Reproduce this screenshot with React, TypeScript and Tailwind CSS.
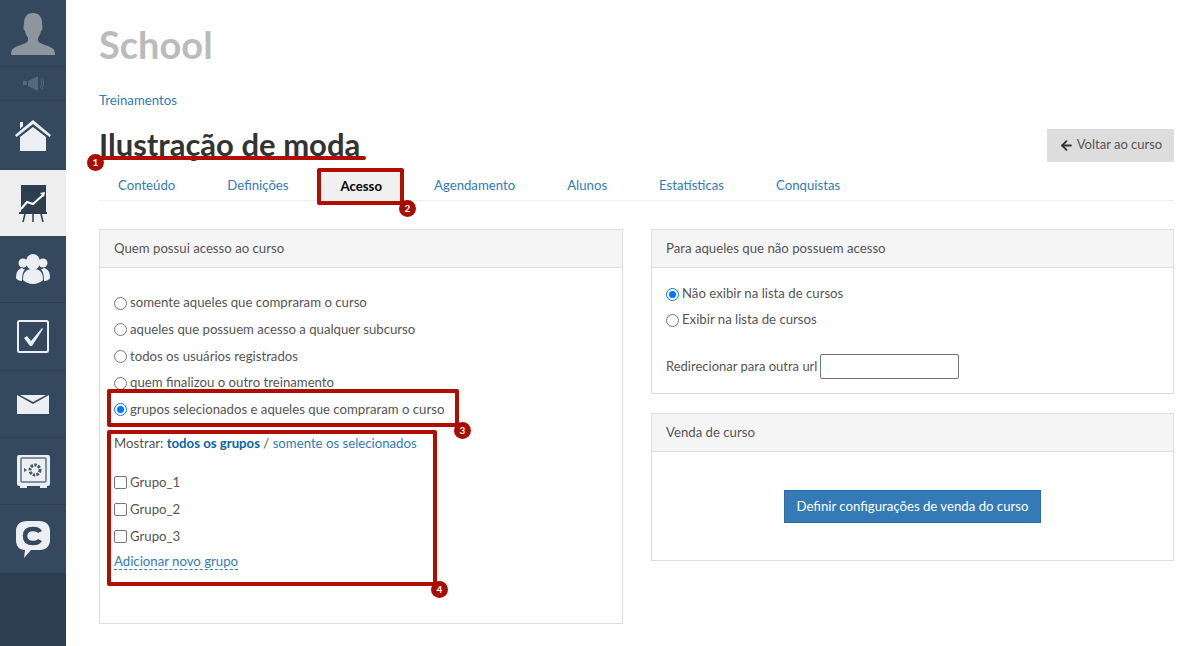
import { ArrowLeft } from 'lucide-react';

const tabs = ['Conteúdo', 'Definições', 'Acesso', 'Agendamento', 'Alunos', 'Estatísticas', 'Conquistas'];

const accessOptions = [
  'somente aqueles que compraram o curso',
  'aqueles que possuem acesso a qualquer subcurso',
  'todos os usuários registrados',
  'quem finalizou o outro treinamento',
  'grupos selecionados e aqueles que compraram o curso',
];

const Radio = ({ checked = false }: { checked?: boolean }) => (
  <span className={`inline-block w-[13px] h-[13px] rounded-full shrink-0 border ${checked ? 'border-[#0075ff] bg-white p-[2px]' : 'border-[#767676] bg-white'}`}>
    {checked && <span className="block w-full h-full rounded-full bg-[#0075ff]" />}
  </span>
);

const Checkbox = () => <span className="inline-block w-[13px] h-[13px] rounded-[2px] border border-[#767676] bg-white shrink-0" />;

const Marker = ({ n }: { n: number }) => (
  <span className="block w-[17px] h-[17px] rounded-full bg-[#a80e00] text-white text-[10px] font-bold leading-[17px] text-center">{n}</span>
);

const Sidebar = () => (
  <aside className="w-[66px] shrink-0 h-[646px] bg-[#2d3e50] flex flex-col">
    <div className="h-[67px] bg-[#34495e] border-b border-[#2d3e50] flex items-center justify-center">
      <svg width="44" height="42" viewBox="0 0 44 42" fill="#8e959c" className="mt-[1px]">
        <path d="M22 0c6 0 9 4 9 10 0 2 .5 3 .5 5s-1 2-1.500 3c-.5 3-1.500 5-3 6.500V28c2 3 9 4 14 7 2 1 3 3 3 7H0c0-4 1-6 3-7 5-3 12-4 14-7v-3.500c-1.500-1.500-2.500-3.500-3-6.500-.5-1-1.500-1-1.500-3s.5-3 .5-5c0-6 3-10 9-10z" />
      </svg>
    </div>
    <div className="h-[34px] bg-[#34495e] border-b border-[#2d3e50] flex items-center justify-center">
      <svg width="21" height="15" viewBox="0 0 21 15" fill="#55687c">
        <path d="M0 5h4v4H0zM5 5l10-5v15L5 10z" />
        <path d="M17 3c2 2 2 7 0 9M19 2c2 3 2 8 0 11" stroke="#55687c" fill="none" />
      </svg>
    </div>
    <div className="h-[69px] bg-[#34495e] flex items-center justify-center">
      <svg width="36" height="32" viewBox="0 0 36 32" fill="#eceff1">
        <path d="M5 2h3v4L5 9z" />
        <path d="M18 0L0 15l1.500 2L18 4l16.500 13 1.500-2z" />
        <path d="M5 17L18 7l13 10v14H5z" />
      </svg>
    </div>
    <div className="h-[66px] bg-[#eeeeee] flex items-center justify-center">
      <svg width="28" height="38" viewBox="0 0 28 38" fill="none" className="mt-[2px]">
        <rect x="2" y="0" width="25" height="27" fill="#2d3e50" />
        <path d="M2 24l6-7 6 2 10-9" stroke="#fff" strokeWidth="2" />
        <path d="M21 8l5-1-1 5z" fill="#fff" />
        <path d="M0 28h28" stroke="#2d3e50" strokeWidth="2" />
        <path d="M6 29l-2 8M14 29v8M22 29l2 8" stroke="#2d3e50" strokeWidth="1.500" />
      </svg>
    </div>
    <div className="h-[67px] bg-[#34495e] border-b border-[#2d3e50] flex items-center justify-center">
      <svg width="34" height="30" viewBox="0 0 34 30" fill="#eceff1">
        <ellipse cx="17" cy="8" rx="7" ry="8" />
        <circle cx="7" cy="9" r="4.500" />
        <circle cx="27" cy="9" r="4.500" />
        <path d="M7 26c0-7 2-11 10-11s10 4 10 11c-2 2-6 4-10 4s-8-2-10-4z" />
        <path d="M0 24c0-6 2-9 6-10 1 1 2 1 3 1-2 2-3 6-3 12-3 0-5-1-6-3zM34 24c0-6-2-9-6-10-1 1-2 1-3 1 2 2 3 6 3 12 3 0 5-1 6-3z" />
      </svg>
    </div>
    <div className="h-[68px] bg-[#34495e] border-b border-[#2d3e50] flex items-center justify-center">
      <svg width="32" height="33" viewBox="0 0 32 33" fill="none">
        <rect x="1" y="1" width="30" height="31" rx="1.500" stroke="#eceff1" strokeWidth="2" />
        <path d="M7 18l3-2 4 5L25 8l1 1-11 17h-2z" fill="#eceff1" />
      </svg>
    </div>
    <div className="h-[67px] bg-[#34495e] border-b border-[#2d3e50] flex items-center justify-center">
      <svg width="32" height="19" viewBox="0 0 32 19" fill="#eceff1">
        <path d="M0 0l16 9L32 0v19H0z" />
        <path d="M3 0h26L16 7z" />
      </svg>
    </div>
    <div className="h-[67px] bg-[#34495e] border-b border-[#2d3e50] flex items-center justify-center">
      <svg width="33" height="33" viewBox="0 0 33 33" fill="none">
        <rect x="0" y="0" width="33" height="31" rx="2" fill="#eceff1" />
        <rect x="4" y="3" width="25" height="24" rx="1" fill="#eceff1" stroke="#5f7183" strokeWidth="1.500" />
        <circle cx="18" cy="15" r="5" stroke="#45586b" strokeWidth="3" strokeDasharray="2.500 1.200" />
        <path d="M7 13l3 2-3 2z" fill="#45586b" />
        <path d="M3 31h7v2H3zM23 31h7v2h-7z" fill="#eceff1" />
      </svg>
    </div>
    <div className="h-[68px] bg-[#34495e] flex items-center justify-center">
      <svg width="34" height="37" viewBox="0 0 34 37" fill="#eceff1">
        <path d="M11 0h12c7 0 11 4 11 10v9c0 6-4 10-10 10H15l-7 8 1-8c-6 0-9-4-9-10v-9C0 4 4 0 11 0z" />
        <path d="M24 11c-1-2-3-3-7-3-5 0-8 2-8 7s3 7 8 7c4 0 6-1 7-3" stroke="#34495e" strokeWidth="4.500" fill="none" />
      </svg>
    </div>
  </aside>
);

const Panel = ({ title, className, children }: { title: string; className: string; children: React.ReactNode }) => (
  <section className={`border border-[#ddd] bg-white ${className}`}>
    <div className="h-[38px] bg-[#f5f5f5] border-b border-[#ddd] px-[14px] flex items-center text-[13.200px] text-[#555]">{title}</div>
    {children}
  </section>
);

export default function App() {
  return (
    <div className="relative w-[1200px] h-[646px] overflow-hidden flex bg-white text-[13.200px] text-[#555] font-['Lato',Arial,sans-serif]">
      <Sidebar />
      <main className="flex-1 pl-[33px] pr-[26px]">
        <h2 className="text-[38px] leading-[40px] font-bold text-[#bbb] mt-[24px]">School</h2>
        <a className="block mt-[27px] text-[#337ab7] leading-[18px]">Treinamentos</a>
        <div className="flex items-center justify-between mt-[12px] h-[48px]">
          <h1 className="text-[31px] font-bold text-[#333] leading-[40px] -mt-[2px]">Ilustração de moda</h1>
          <button className="h-[33px] w-[127px] bg-[#ddd] text-[13px] text-[#555] flex items-center justify-center gap-[3px]">
            <ArrowLeft size={15} strokeWidth={3} className="text-[#333]" />
            Voltar ao curso
          </button>
        </div>
        <nav className="flex h-[32px] border-b border-[#eee] items-center gap-[52px] pl-[19px] pt-[2px] text-[13.200px]">
          {tabs.map((t) => (
            <a
              key={t}
              className={t === 'Acesso' ? 'text-black font-bold bg-[#f0f0f0] px-[20px] -mx-[20px] leading-[30px]' : 'text-[#337ab7]'}
            >
              {t}
            </a>
          ))}
        </nav>
        <div className="flex gap-[28px] mt-[28px]">
          <Panel title="Quem possui acesso ao curso" className="w-[524px] h-[395px]">
            <div className="px-[14px] pt-[22px]">
              {accessOptions.map((o, i) => (
                <label key={o} className="flex items-center gap-[3px] h-[26.600px]">
                  <Radio checked={i === 4} />
                  {o}
                </label>
              ))}
              <p className="mt-[11px] leading-[18px]">
                Mostrar: <b className="text-[#0b62a8]">todos os grupos</b> / <span className="text-[#337ab7]">somente os selecionados</span>
              </p>
              <div className="mt-[17px]">
                {['Grupo_1', 'Grupo_2', 'Grupo_3'].map((g) => (
                  <label key={g} className="flex items-center gap-[3px] h-[27px]">
                    <Checkbox />
                    {g}
                  </label>
                ))}
              </div>
              <a className="inline-block text-[#337ab7] border-b border-dashed border-[#337ab7] leading-[16px] mt-[3px]">Adicionar novo grupo</a>
            </div>
          </Panel>
          <div className="w-[523px] flex flex-col gap-[19px]">
            <Panel title="Para aqueles que não possuem acesso" className="h-[165px]">
              <div className="px-[14px] pt-[13px]">
                <label className="flex items-center gap-[3px] h-[26px]"><Radio checked />Não exibir na lista de cursos</label>
                <label className="flex items-center gap-[3px] h-[26px]"><Radio />Exibir na lista de cursos</label>
                <div className="flex items-center gap-[3px] mt-[21px] text-[13px]">
                  Redirecionar para outra url
                  <span className="w-[139px] h-[25px] border border-[#767676] rounded-[2px]" />
                </div>
              </div>
            </Panel>
            <Panel title="Venda de curso" className="h-[148px]">
              <div className="flex justify-center pt-[38px]">
                <button className="w-[257px] h-[33px] bg-[#337ab7] text-white border border-[#2e6da4]">Definir configurações de venda do curso</button>
              </div>
            </Panel>
          </div>
        </div>
      </main>
      {/* annotation frames drawn over the screenshot */}
      <div className="absolute left-[100px] top-[156px] w-[266px] h-[4px] rounded-full bg-[#b00e00]" />
      <div className="absolute left-[317px] top-[168px] w-[87px] h-[37px] rounded-[2px] border-[4px] border-[#b00e00]" />
      <div className="absolute left-[107px] top-[389px] w-[352px] h-[38px] rounded-[2px] border-[4px] border-[#b00e00]" />
      <div className="absolute left-[107px] top-[430px] w-[330px] h-[156px] rounded-[2px] border-[4px] border-[#b00e00]" />
      <div className="absolute left-[87px] top-[154px]"><Marker n={1} /></div>
      <div className="absolute left-[399px] top-[200px]"><Marker n={2} /></div>
      <div className="absolute left-[454px] top-[422px]"><Marker n={3} /></div>
      <div className="absolute left-[431px] top-[581px]"><Marker n={4} /></div>
    </div>
  );
}
